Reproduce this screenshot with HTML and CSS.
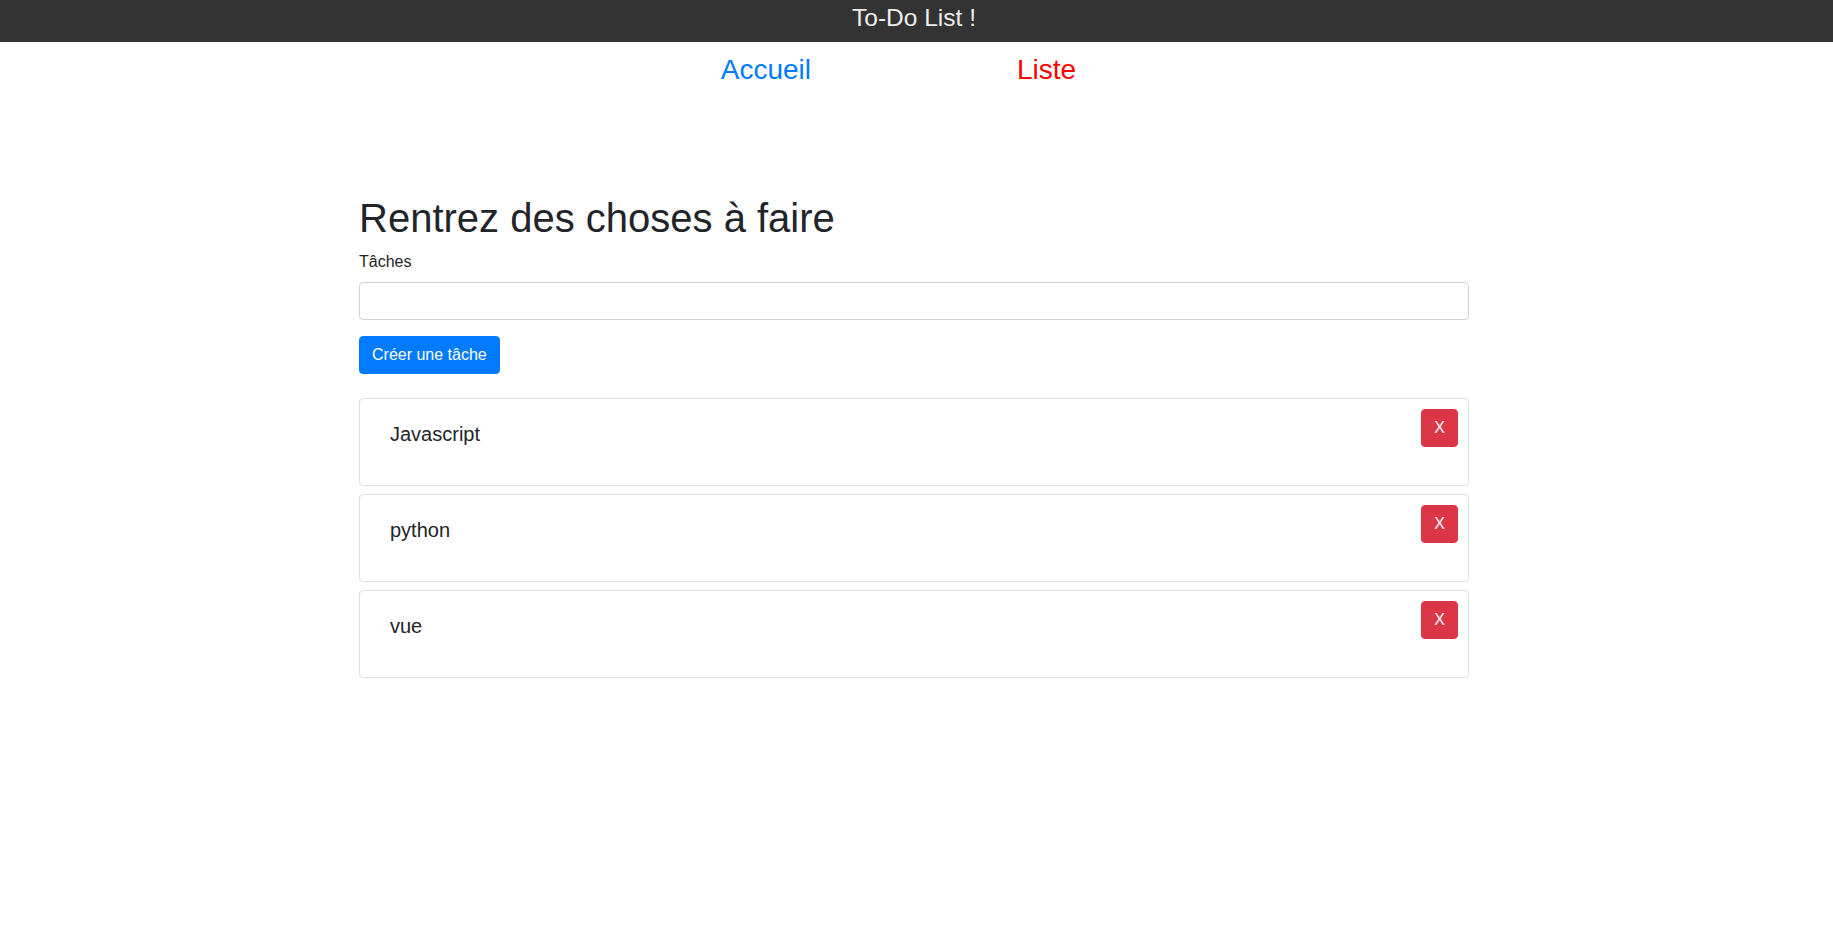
FILE: index.html
```html
<!DOCTYPE html>
<html lang="fr">
<head>
<meta charset="utf-8">
<title>To-Do List !</title>
<link rel="stylesheet" href="styles.css">
</head>
<body>
<header class="topbar">
  <div class="topbar-title">To-Do List !</div>
</header>
<nav class="nav">
  <a class="nav-link nav-home" href="#">Accueil</a>
  <a class="nav-link nav-list" href="#">Liste</a>
</nav>
<main class="container">
  <h1 class="page-title">Rentrez des choses à faire</h1>
  <form class="task-form">
    <div class="form-group">
      <label class="form-label" for="task">Tâches</label>
      <input class="form-control" id="task" type="text">
    </div>
    <button class="btn btn-primary" type="button">Créer une tâche</button>
  </form>
  <ul class="task-list">
    <li class="card">
      <p class="card-text">Javascript</p>
      <button class="btn btn-danger btn-remove" type="button">X</button>
    </li>
    <li class="card">
      <p class="card-text">python</p>
      <button class="btn btn-danger btn-remove" type="button">X</button>
    </li>
    <li class="card">
      <p class="card-text">vue</p>
      <button class="btn btn-danger btn-remove" type="button">X</button>
    </li>
  </ul>
</main>
</body>
</html>
```
FILE: styles.css
```css
* { box-sizing: border-box; }

html, body {
  margin: 0;
  padding: 0;
}

body {
  font-family: "Liberation Sans", Arial, sans-serif;
  font-size: 16px;
  line-height: 1.5;
  color: #212529;
  background: #fff;
}

.topbar {
  background: #333333;
  height: 42px;
  padding-right: 5px;
}

.topbar-title {
  text-align: center;
  color: #eeeeee;
  font-size: 24.5px;
  line-height: 36px;
}

.nav {
  display: flex;
  justify-content: center;
  gap: 206px;
  margin-top: 7px;
  padding-right: 36px;
}

.nav-link {
  font-size: 28px;
  line-height: 42px;
  text-decoration: none;
}

.nav-home { color: #007bff; }
.nav-list { color: #ff0000; }

.container {
  width: 1110px;
  margin-left: calc((100% - 1110px) / 2 - 2.5px);
  padding-top: 103px;
}

.page-title {
  font-size: 40px;
  font-weight: 500;
  line-height: 1.2;
  margin: 0 0 8px;
}

.task-form {
  margin: 0;
}

.form-group {
  margin-bottom: 16px;
}

.form-label {
  display: inline-block;
  margin-bottom: 8px;
}

.form-control {
  display: block;
  width: 100%;
  height: 38px;
  padding: 6px 12px;
  font-family: inherit;
  font-size: 16px;
  color: #495057;
  background: #fff;
  border: 1px solid #ced4da;
  border-radius: 4px;
}

.btn {
  display: inline-block;
  font-family: inherit;
  font-size: 16px;
  line-height: 1.5;
  padding: 6px 12px;
  border: 1px solid transparent;
  border-radius: 4px;
  color: #fff;
  cursor: pointer;
}

.btn-primary {
  background: #007bff;
  border-color: #007bff;
}

.btn-danger {
  background: #dc3545;
  border-color: #dc3545;
}

.task-list {
  list-style: none;
  margin: 24px 0 0;
  padding: 0;
  display: flex;
  flex-direction: column;
  gap: 8px;
}

.card {
  position: relative;
  border: 1px solid rgba(0, 0, 0, 0.125);
  border-radius: 4px;
  padding: 20px 20px 20px 30px;
}

.card-text {
  margin: 0 0 16px;
  font-size: 20px;
  line-height: 30px;
}

.btn-remove {
  position: absolute;
  top: 10px;
  right: 10px;
}
```
